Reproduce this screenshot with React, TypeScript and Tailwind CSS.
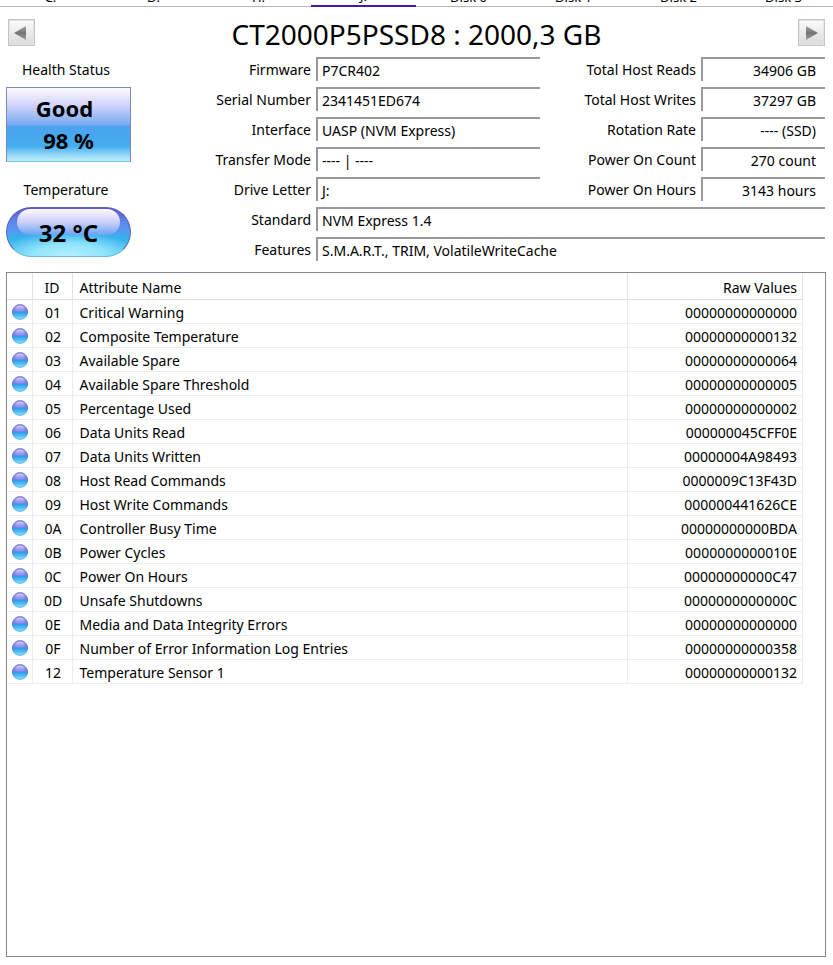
const TABS = ["C:", "D:", "H:", "J:", "Disk 0", "Disk 1", "Disk 2", "Disk 3"];

const DRIVE_INFO = [
  { label: "Firmware", value: "P7CR402" },
  { label: "Serial Number", value: "2341451ED674" },
  { label: "Interface", value: "UASP (NVM Express)" },
  { label: "Transfer Mode", value: "---- | ----" },
  { label: "Drive Letter", value: "J:" },
];

const USAGE_INFO = [
  { label: "Total Host Reads", value: "34906 GB" },
  { label: "Total Host Writes", value: "37297 GB" },
  { label: "Rotation Rate", value: "---- (SSD)" },
  { label: "Power On Count", value: "270 count" },
  { label: "Power On Hours", value: "3143 hours" },
];

const WIDE_INFO = [
  { label: "Standard", value: "NVM Express 1.4" },
  { label: "Features", value: "S.M.A.R.T., TRIM, VolatileWriteCache" },
];

const ATTRIBUTES = [
  ["01", "Critical Warning", "00000000000000"],
  ["02", "Composite Temperature", "00000000000132"],
  ["03", "Available Spare", "00000000000064"],
  ["04", "Available Spare Threshold", "00000000000005"],
  ["05", "Percentage Used", "00000000000002"],
  ["06", "Data Units Read", "000000045CFF0E"],
  ["07", "Data Units Written", "00000004A98493"],
  ["08", "Host Read Commands", "0000009C13F43D"],
  ["09", "Host Write Commands", "000000441626CE"],
  ["0A", "Controller Busy Time", "00000000000BDA"],
  ["0B", "Power Cycles", "0000000000010E"],
  ["0C", "Power On Hours", "00000000000C47"],
  ["0D", "Unsafe Shutdowns", "0000000000000C"],
  ["0E", "Media and Data Integrity Errors", "00000000000000"],
  ["0F", "Number of Error Information Log Entries", "00000000000358"],
  ["12", "Temperature Sensor 1", "00000000000132"],
];

function ArrowButton({ direction }: { direction: "left" | "right" }) {
  const points = direction === "left" ? "6,14 18,7 18,21" : "20,14 8,7 8,21";
  return (
    <button
      type="button"
      aria-label={direction === "left" ? "Previous drive" : "Next drive"}
      className="h-[27px] w-[27px] shrink-0 border border-[#c4c4c4] bg-linear-to-b from-[#fcfcfc] to-[#dadada] shadow-[inset_0_0_0_1px_#e4e4e4]"
    >
      <svg viewBox="0 0 27 27" className="-m-px h-[27px] w-[27px]">
        <defs>
          <linearGradient id={`arrow-${direction}`} x1="0" y1="0" x2="0" y2="1">
            <stop offset="0" stopColor="#a8a8a8" />
            <stop offset="0.5" stopColor="#747474" />
            <stop offset="1" stopColor="#a0a0a0" />
          </linearGradient>
        </defs>
        <polygon points={points} fill={`url(#arrow-${direction})`} />
      </svg>
    </button>
  );
}

function Field({
  label,
  value,
  valueClass,
}: {
  label: string;
  value: string;
  valueClass: string;
}) {
  return (
    <div className="flex h-[24px]">
      <dt className="min-w-0 flex-1 pr-[5px] text-right leading-[26px] whitespace-nowrap">
        {label}
      </dt>
      <dd
        className={`border-t-2 border-l-2 border-[#999999] leading-[24px] whitespace-nowrap ${valueClass}`}
      >
        {value}
      </dd>
    </div>
  );
}

function HealthBadge() {
  return (
    <div className="flex h-[75px] flex-col items-center border border-[#8086c4] border-b-[#7cc4e4] bg-[linear-gradient(to_bottom,#fdfbff_0%,#d5d6fb_22%,#7aaaf2_50%,#4aa2ee_53%,#44aeee_80%,#a4e0fa_94%,#b8eafc_100%)] pt-[4px] text-[22px] leading-[32px] font-bold">
      <div className="pr-[8px]">Good</div>
      <div>98 %</div>
    </div>
  );
}

function TemperatureBadge() {
  return (
    <div className="relative flex h-[50px] items-center justify-center overflow-hidden rounded-full border border-[#5c62b4] border-b-[#6cb8e0] bg-[radial-gradient(ellipse_60%_50%_at_50%_100%,#b4f0ff_0%,#90e4fc_50%,transparent_100%),linear-gradient(to_bottom,#5c58cc_0%,#5c88f2_30%,#5898f0_48%,#34b0ec_60%,#4cc0f0_100%)]">
      <div className="absolute inset-x-[10px] top-px h-[26px] rounded-full bg-linear-to-b from-[#fcf8ff] via-[#ccd0fb] to-[#68a4f2]" />
      <div className="relative pt-[2px] text-[24px] leading-[48px] font-bold">32 °C</div>
    </div>
  );
}

function StatusBall() {
  return (
    <svg viewBox="0 0 16 16" className="ml-auto h-[16px] w-[16px]" role="img" aria-label="Good">
      <circle cx="8" cy="8" r="7.5" fill="url(#ball)" stroke="url(#ball-rim)" />
      <ellipse cx="8" cy="4.5" rx="5" ry="3" fill="url(#ball-gloss)" />
    </svg>
  );
}

export default function App() {
  return (
    <div className="flex min-h-screen flex-col bg-white pb-[8px] font-['Noto_Sans','Open_Sans',sans-serif] text-[14px] text-black">
      <svg className="absolute h-0 w-0" aria-hidden="true">
        <defs>
          <linearGradient id="ball" x1="0" y1="0" x2="0" y2="1">
            <stop offset="0" stopColor="#8a78d8" />
            <stop offset="0.48" stopColor="#7488ea" />
            <stop offset="0.52" stopColor="#3698ec" />
            <stop offset="0.75" stopColor="#4cc0f6" />
            <stop offset="1" stopColor="#8ce6fc" />
          </linearGradient>
          <linearGradient id="ball-rim" x1="0" y1="0" x2="0" y2="1">
            <stop offset="0" stopColor="#8c80cc" />
            <stop offset="0.5" stopColor="#4c74cc" />
            <stop offset="1" stopColor="#78bce0" />
          </linearGradient>
          <linearGradient id="ball-gloss" x1="0" y1="0" x2="0" y2="1">
            <stop offset="0" stopColor="#d8d0f8" />
            <stop offset="1" stopColor="#90a0f0" stopOpacity="0.4" />
          </linearGradient>
        </defs>
      </svg>

      {/* Drive tabs, scrolled so only the bottom edge shows */}
      <nav className="flex h-[7px] items-end overflow-hidden">
        {TABS.map((tab) => (
          <button
            key={tab}
            type="button"
            className={`h-[20px] w-[105px] shrink-0 text-[13px] leading-[18px] first:w-[101px] ${
              tab === "J:" ? "border-b-2 border-[#4a18a8]" : "border-b border-[#b8b8b8]"
            }`}
          >
            {tab}
          </button>
        ))}
      </nav>

      <header className="flex items-start justify-between pt-[12px] pr-[8px] pl-[8px]">
        <ArrowButton direction="left" />
        <h1 className="text-[28px] leading-[30px]">CT2000P5PSSD8 : 2000,3 GB</h1>
        <ArrowButton direction="right" />
      </header>

      <div className="flex pt-[8px] pr-[8px] pl-[6px]">
        <aside className="w-[125px] shrink-0 text-center">
          <div className="pr-[5px] leading-[26px]">Health Status</div>
          <div className="pt-[4px]">
            <HealthBadge />
          </div>
          <div className="pt-[15px] pr-[5px] leading-[26px]">Temperature</div>
          <div className="pt-[4px]">
            <TemperatureBadge />
          </div>
        </aside>

        <div className="min-w-0 flex-1">
          <div className="flex">
            <dl className="flex flex-1 flex-col gap-[6px]">
              {DRIVE_INFO.map((row) => (
                <Field key={row.label} {...row} valueClass="w-[224px] pl-[4px]" />
              ))}
            </dl>
            <dl className="flex w-[285px] flex-col gap-[6px]">
              {USAGE_INFO.map((row) => (
                <Field key={row.label} {...row} valueClass="w-[124px] pr-[9px] text-right" />
              ))}
            </dl>
          </div>
          <dl className="flex flex-col gap-[6px] pt-[6px]">
            {WIDE_INFO.map((row) => (
              <Field key={row.label} {...row} valueClass="w-[509px] pl-[4px]" />
            ))}
          </dl>
        </div>
      </div>

      <div className="mt-[11px] mr-[7px] ml-[6px] flex-1 border border-[#828790] pr-[22px]">
        <table className="w-full table-fixed border-collapse">
          <colgroup>
            <col className="w-[25px]" />
            <col className="w-[40px]" />
            <col />
            <col className="w-[175px]" />
          </colgroup>
          <thead>
            <tr className="h-[26px] border-b border-[#dedede] leading-[20px]">
              <th className="border-r border-[#e2e2e2]" aria-label="Status" />
              <th className="border-r border-[#e2e2e2] pt-[5px] font-normal">ID</th>
              <th className="border-r border-[#e2e2e2] pt-[5px] pl-[7px] text-left font-normal">
                Attribute Name
              </th>
              <th className="border-r border-[#e2e2e2] pt-[5px] pr-[5px] text-right font-normal">
                Raw Values
              </th>
            </tr>
          </thead>
          <tbody>
            {ATTRIBUTES.map(([id, name, raw]) => (
              <tr key={id} className="h-[24px] border-b border-[#ececec] leading-[20px]">
                <td className="border-r border-[#ececec] pt-[2px] pr-[4px]">
                  <StatusBall />
                </td>
                <td className="border-r border-[#ececec] pt-[3px] pl-[2px] text-center">{id}</td>
                <td className="border-r border-[#ececec] pt-[3px] pl-[7px]">{name}</td>
                <td className="border-r border-[#ececec] pt-[3px] pr-[5px] text-right">{raw}</td>
              </tr>
            ))}
          </tbody>
        </table>
      </div>
    </div>
  );
}
